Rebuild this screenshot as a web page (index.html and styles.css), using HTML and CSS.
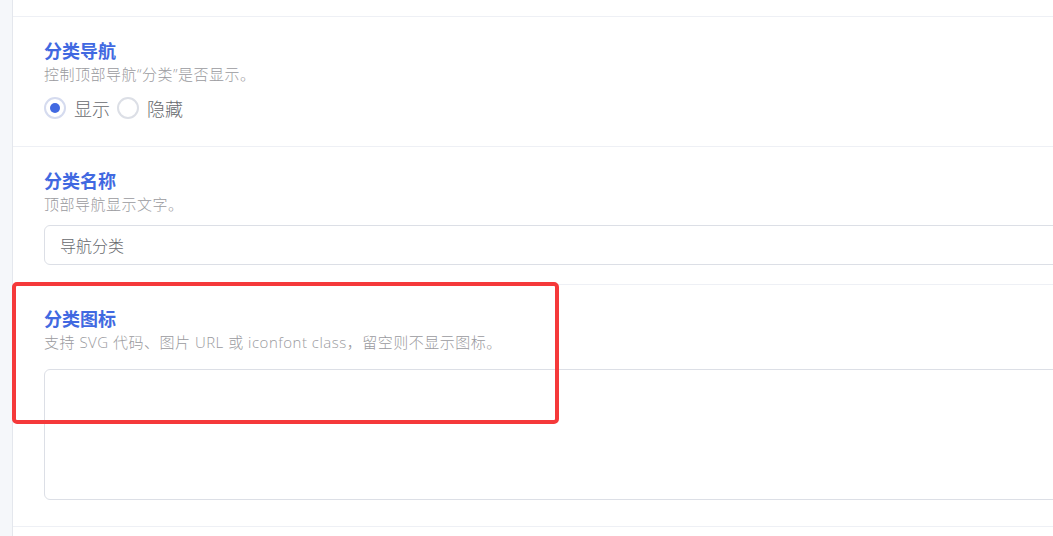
FILE: index.html
```html
<!DOCTYPE html>
<html lang="zh-CN">

<head>
    <meta charset="UTF-8">
    <meta name="viewport" content="width=device-width, initial-scale=1.0">
    <title>导航设置</title>
    <link rel="stylesheet" href="styles.css">
</head>

<body>
    <div class="layout">
        <aside class="side-rail"></aside>
        <main class="settings">
            <div class="field field-top"></div>

            <div class="field">
                <h3 class="field-title">分类导航</h3>
                <p class="field-desc">控制顶部导航“分类”是否显示。</p>
                <div class="radio-group">
                    <label class="radio checked"><span class="radio-dot"></span>显示</label>
                    <label class="radio"><span class="radio-dot"></span>隐藏</label>
                </div>
            </div>

            <div class="field">
                <h3 class="field-title">分类名称</h3>
                <p class="field-desc">顶部导航显示文字。</p>
                <input class="text-input" type="text" value="导航分类">
            </div>

            <div class="field field-icon">
                <h3 class="field-title">分类图标</h3>
                <p class="field-desc">支持 SVG 代码、图片 URL 或 iconfont class，留空则不显示图标。</p>
                <textarea class="text-area"></textarea>
            </div>

            <div class="field field-bottom"></div>
        </main>
    </div>
    <div class="highlight-box"></div>
</body>

</html>
```

FILE: styles.css
```css
:root {
    --primary-color: #4169e1;
    --text-color: #67696e;
    --subtext-color: #9a9a9e;
    --border-color: #dcdfe6;
    --line-color: #eef0f5;
    --rail-color: #f5f7fa;
}

* {
    margin: 0;
    padding: 0;
    box-sizing: border-box;
}

body {
    font-family: "Noto Sans CJK SC", "Noto Sans", sans-serif;
    background: #fff;
    color: var(--text-color);
    overflow: hidden;
    height: 536px;
    position: relative;
}

.layout {
    display: flex;
    width: 1300px;
    min-height: 536px;
}

.side-rail {
    width: 13px;
    flex-shrink: 0;
    background: var(--rail-color);
    border-right: 1px solid #e4e7ed;
}

.settings {
    flex: 1;
}

.field {
    padding: 20px 0 19px 31px;
    border-bottom: 1px solid var(--line-color);
}

.field-top {
    height: 17px;
    padding: 0;
}

.field-bottom {
    border-bottom: none;
    height: 20px;
    padding: 0;
}

.field-title {
    font-size: 18px;
    line-height: 26px;
    font-weight: bold;
    color: var(--primary-color);
}

.field-desc {
    font-family: "Open Sans", "Noto Sans CJK SC", sans-serif;
    font-size: 15px;
    line-height: 22px;
    font-weight: 300;
    letter-spacing: 0.5px;
    color: var(--subtext-color);
}

.radio-group {
    display: flex;
    align-items: center;
    gap: 7px;
    margin: 10px 0 6px;
    height: 26px;
}

.radio {
    display: flex;
    align-items: center;
    gap: 8px;
    font-size: 18px;
    font-weight: 300;
    color: var(--text-color);
    cursor: pointer;
}

.radio-dot {
    width: 22px;
    height: 22px;
    border-radius: 50%;
    border: 2px solid var(--border-color);
    background: #fff;
    display: flex;
    align-items: center;
    justify-content: center;
}

.radio.checked .radio-dot {
    border-color: #d5dbef;
}

.radio.checked .radio-dot::after {
    content: "";
    width: 10px;
    height: 10px;
    border-radius: 50%;
    background: var(--primary-color);
}

.text-input {
    display: block;
    margin-top: 10px;
    width: 1150px;
    height: 40px;
    padding: 0 15px;
    border: 1px solid var(--border-color);
    border-radius: 6px;
    font-family: inherit;
    font-size: 16px;
    font-weight: 300;
    color: var(--text-color);
    outline: none;
}

.text-area {
    display: block;
    margin: 16px 0 7px;
    width: 1150px;
    height: 131px;
    border: 1px solid var(--border-color);
    border-radius: 6px;
    resize: none;
    outline: none;
    font-family: inherit;
}

/* red callout over the icon field */
.highlight-box {
    position: absolute;
    left: 12px;
    top: 282px;
    width: 547px;
    height: 142px;
    border: 4px solid #f5393a;
    border-radius: 5px;
    pointer-events: none;
}
```
